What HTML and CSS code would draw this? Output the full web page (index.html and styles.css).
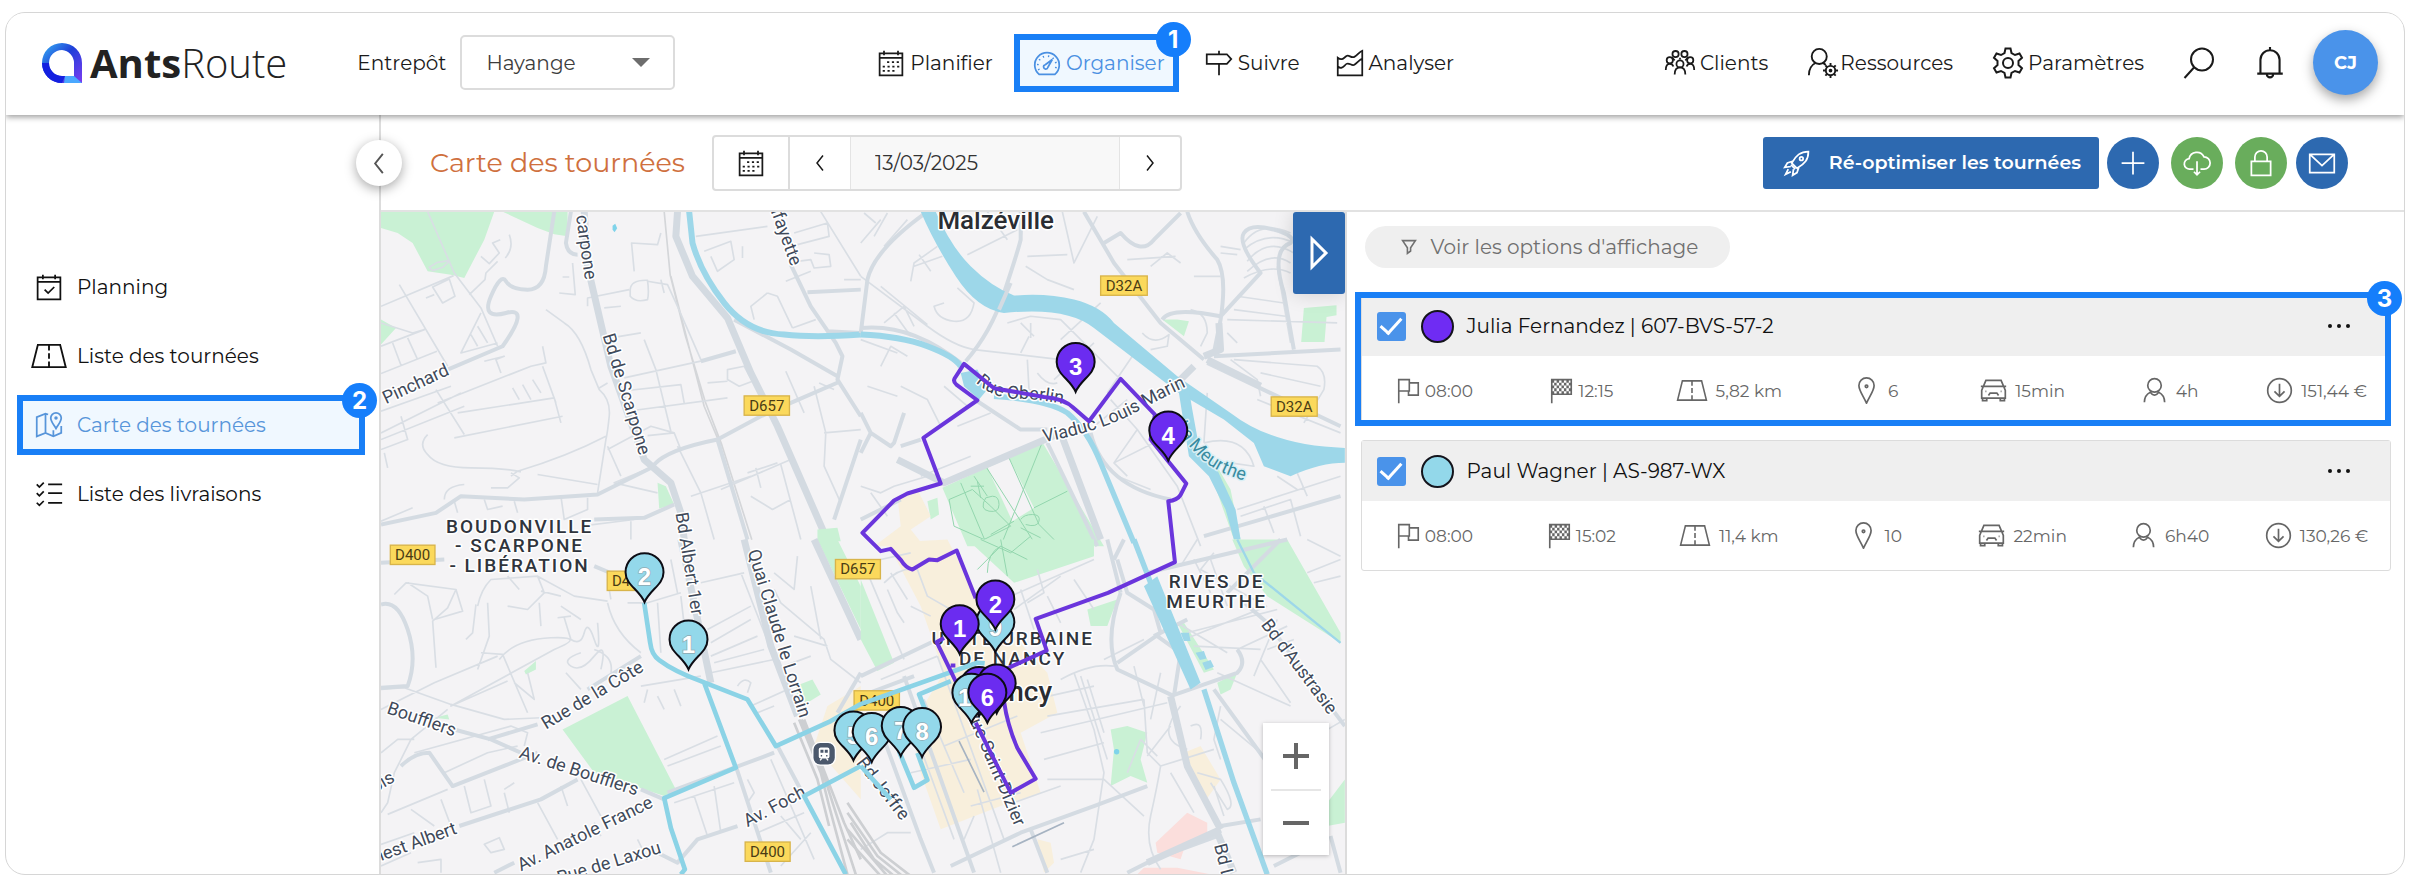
FILE: index.html
```html
<!DOCTYPE html>
<html lang="fr">
<head>
<meta charset="utf-8">
<meta name="viewport" content="width=device-width, initial-scale=1">
<title>AntsRoute – Carte des tournées</title>
<link rel="stylesheet" href="styles.css">
</head>
<body>
<svg class="sprite" aria-hidden="true">
  <symbol id="i-calendar" viewBox="0 0 32 32"><path d="M3 5h26v25H3zM3 10h26M8 2v5M24 2v5"/><path stroke-dasharray="2.500 3" d="M11.500 15h14M6.500 20h19M6.500 25h14"/></symbol>
  <symbol id="i-gauge" viewBox="0 0 32 32"><path d="M7 29a14 14 0 1 1 18 0zM14 18l8-6-5 9a2.500 2.500 0 1 1-3-3z"/><path stroke-dasharray="1.500 4.200" d="M7 24a10.500 10.500 0 1 1 18 0"/></symbol>
  <symbol id="i-sign" viewBox="0 0 32 32"><path d="M2 6h23l5 5.500-5 5.500H2zM16 2v4M16 17v13"/></symbol>
  <symbol id="i-chart" viewBox="0 0 32 32"><path d="M2 30V10c5 4 7 0 10-2s5 3 9 1 6-6 9-7v28zM2 20c5 4 7-1 10-3s6 3 9 1 6-6 9-7"/></symbol>
  <symbol id="i-group" viewBox="0 0 36 32"><circle cx="13" cy="6" r="3.500"/><circle cx="23" cy="6" r="3.500"/><circle cx="6.500" cy="13" r="3.500"/><circle cx="29.500" cy="13" r="3.500"/><circle cx="18" cy="17" r="4"/><path d="M2 24c0-5 2-7 4.500-7s3.500 1 4 3M34 24c0-5-2-7-4.500-7s-3.500 1-4 3M12 29c0-5 2-8 6-8s6 3 6 8M9 10l3 3M27 10l-3 3M18 10v2"/></symbol>
  <symbol id="i-usergear" viewBox="0 0 34 34"><circle cx="13" cy="10" r="8"/><path d="M2 30c0-8 3-11 7-13M17 17l3 2"/><circle cx="25" cy="25" r="5"/><path d="M25 17v3M25 30v3M17 25h3M30 25h3M19.500 19.500l2 2M28.500 28.500l2 2M30.500 19.500l-2 2M21.500 28.500l-2 2"/><circle cx="25" cy="25" r="1"/></symbol>
  <symbol id="i-gear" viewBox="0 0 32 32"><path d="M13.500 1.500h5l1 4.500 3.500 2 4.500-1.500 2.500 4.300-3.500 3.200v4l3.500 3.200-2.500 4.300-4.500-1.500-3.500 2-1 4.500h-5l-1-4.500-3.500-2-4.500 1.500L2 21.200 5.500 18v-4L2 10.800l2.500-4.300L9 8l3.500-2z"/><circle cx="16" cy="16" r="5"/></symbol>
  <symbol id="i-search" viewBox="0 0 32 32"><circle cx="19" cy="12.500" r="11"/><path d="M11 20.500L1.500 31"/></symbol>
  <symbol id="i-bell" viewBox="0 0 28 32"><path d="M2 26h24M5 26V13a9 9 0 0 1 18 0v13M14 1v3M11 26.500a3 3 0 1 0 6 0"/></symbol>
  <symbol id="i-left" viewBox="0 0 16 24"><path d="M12 2L4 12l8 10"/></symbol>
  <symbol id="i-right" viewBox="0 0 16 24"><path d="M4 2l8 10-8 10"/></symbol>
  <symbol id="i-rocket" viewBox="0 0 32 32"><path d="M29 3c-9 0-14 4-19 13l6 6c9-5 13-10 13-19zM11 14l-6 2-3 5 7-1M18 21l-2 6-5 3 1-7M6 23l-3 6 6-3M9 18l5 5"/><circle cx="21" cy="11" r="2"/></symbol>
  <symbol id="i-plus" viewBox="0 0 32 32"><path d="M16 3v26M3 16h26"/></symbol>
  <symbol id="i-cloud" viewBox="0 0 32 32"><path d="M12 23H8a6 6 0 0 1-1-12 9 9 0 0 1 17-2 7 7 0 0 1 0 14h-4M16 14v15M12.500 26l3.500 3.500 3.500-3.500"/></symbol>
  <symbol id="i-lock" viewBox="0 0 32 32"><path d="M5 14h22v16H5zM9 14V9a7 7 0 0 1 14 0v5"/></symbol>
  <symbol id="i-mail" viewBox="0 0 32 32"><path d="M2 6h28v21H2zM2.500 6.500L16 19 29.500 6.500"/></symbol>
  <symbol id="i-plan" viewBox="0 0 32 32"><path d="M3 5h26v25H3zM3 10h26M9 2v5M23 2v5M11 19l4 4 7-7"/></symbol>
  <symbol id="i-road" viewBox="0 0 40 28"><path d="M8 2h24l6 24H2z"/><path stroke-dasharray="6 3" d="M20 2v24"/></symbol>
  <symbol id="i-map" viewBox="0 0 32 32"><path d="M15 4l-3-1-10 4v22l10-4 9 4 9-4V17M12 3v22M21 22v7M24 20c-3-5-6-8-6-12a6 6 0 0 1 12 0c0 4-3 7-6 12z"/><circle cx="24" cy="8" r="1"/></symbol>
  <symbol id="i-list" viewBox="0 0 32 32"><path d="M15 5h16M15 15h16M15 26h16M2 5l3 3 5-5M2 15l3 3 5-5M2 26l3 3 5-5"/></symbol>
  <symbol id="i-filter" viewBox="0 0 20 20"><path d="M2 2h16l-6 9v4l-4 3v-7z"/></symbol>
  <symbol id="i-flag" viewBox="0 0 28 32"><path d="M2 31V2h13v14H2M15 6h11v15H14v-5"/></symbol>
  <symbol id="i-finish" viewBox="0 0 28 32"><path d="M2 31V2h24v18H2"/><path stroke-width="3.500" stroke-dasharray="3 3" d="M2 4h24M5 7.500h21M2 11h24M5 14.500h21M2 18h24"/></symbol>
  <symbol id="i-pin" viewBox="0 0 22 32"><path d="M11 31C7 22 2 16 2 10a9 9 0 0 1 18 0c0 6-5 12-9 21z"/><circle cx="11" cy="11" r="1.500"/></symbol>
  <symbol id="i-car" viewBox="0 0 32 28"><path d="M1 9h3l3-7h18l3 7h3M4 9h24l2 5v9H2v-9zM3 23v3h5v-3M24 23v3h5v-3M10 20l2-3h8l2 3"/><path d="M6.500 15h1M24.500 15h1"/></symbol>
  <symbol id="i-person" viewBox="0 0 26 32"><circle cx="13" cy="10" r="8"/><path d="M1 30c0-7 3-10 7-12M25 30c0-7-3-10-7-12M8 17c2 6 8 6 10 0"/></symbol>
  <symbol id="i-cost" viewBox="0 0 32 32"><circle cx="16" cy="16" r="14"/><path d="M16 8v15M10 17l6 6 6-6"/></symbol>
</svg>

<div class="frame">
  <header class="header">
    <div class="header-left">
      <a class="logo" href="#" aria-label="AntsRoute">
        <svg class="logo-mark" viewBox="0 0 40 40"><defs><linearGradient id="lg" x1="0" y1="0" x2="1" y2="1"><stop offset="0" stop-color="#38b6f5"/><stop offset=".45" stop-color="#1f3fd8"/><stop offset="1" stop-color="#7a3cf2"/></linearGradient></defs><path fill="url(#lg)" fill-rule="evenodd" d="M20 0a20 20 0 0 1 20 20v20H20A20 20 0 0 1 20 0zm0 7a13 13 0 0 0 0 26h12V20A13 13 0 0 0 20 7z"/><path fill="#1420e0" d="M0 20a20 20 0 0 0 20 20l3-7h-3A13 13 0 0 1 7 20z"/><path fill="#4aa8ff" d="M23 33h9l8 7H22z"/></svg>
        <span class="logo-text"><b>Ants</b>Route</span>
      </a>
      <div class="depot">
        <label for="depot">Entrepôt</label>
        <span class="select-wrap"><select id="depot"><option>Hayange</option></select></span>
      </div>
    </div>
    <nav class="nav">
      <a href="#"><svg class="icon"><use href="#i-calendar"/></svg>Planifier</a>
      <a class="nav-active" href="#"><svg class="icon"><use href="#i-gauge"/></svg>Organiser<span class="step">1</span></a>
      <a href="#"><svg class="icon"><use href="#i-sign"/></svg>Suivre</a>
      <a class="nav-last" href="#"><svg class="icon"><use href="#i-chart"/></svg>Analyser</a>
    </nav>
    <div class="header-right">
      <a href="#"><svg class="icon icon-lg"><use href="#i-group"/></svg>Clients</a>
      <a class="tight" href="#"><svg class="icon icon-lg"><use href="#i-usergear"/></svg>Ressources</a>
      <a href="#"><svg class="icon icon-lg"><use href="#i-gear"/></svg>Paramètres</a>
      <button class="plain" aria-label="Rechercher"><svg class="icon icon-lg"><use href="#i-search"/></svg></button>
      <button class="plain" aria-label="Notifications"><svg class="icon icon-lg"><use href="#i-bell"/></svg></button>
      <button class="avatar">CJ</button>
    </div>
  </header>

  <div class="body">
    <aside class="sidebar">
      <button class="collapse" aria-label="Réduire le menu"><svg class="icon"><use href="#i-left"/></svg></button>
      <nav class="menu">
        <a href="#"><svg class="icon"><use href="#i-plan"/></svg>Planning</a>
        <a href="#"><svg class="icon icon-road"><use href="#i-road"/></svg>Liste des tournées</a>
        <a class="menu-active" href="#"><svg class="icon"><use href="#i-map"/></svg>Carte des tournées<span class="step">2</span></a>
        <a href="#"><svg class="icon"><use href="#i-list"/></svg>Liste des livraisons</a>
      </nav>
    </aside>

    <main class="main">
      <div class="toolbar">
        <h1>Carte des tournées</h1>
        <div class="datebar">
          <button class="cell cell-cal" aria-label="Calendrier"><svg class="icon"><use href="#i-calendar"/></svg></button>
          <button class="cell" aria-label="Jour précédent"><svg class="icon"><use href="#i-left"/></svg></button>
          <input type="text" value="13/03/2025" aria-label="Date">
          <button class="cell" aria-label="Jour suivant"><svg class="icon"><use href="#i-right"/></svg></button>
        </div>
        <div class="actions">
          <button class="optimise"><svg class="icon"><use href="#i-rocket"/></svg>Ré-optimiser les tournées</button>
          <button class="round" aria-label="Ajouter"><svg class="icon"><use href="#i-plus"/></svg></button>
          <button class="round green" aria-label="Exporter"><svg class="icon"><use href="#i-cloud"/></svg></button>
          <button class="round green" aria-label="Verrouiller"><svg class="icon"><use href="#i-lock"/></svg></button>
          <button class="round round-mail" aria-label="Envoyer"><svg class="icon"><use href="#i-mail"/></svg></button>
        </div>
      </div>

      <div class="content">
        <section class="map" aria-label="Carte">
          <svg class="map-canvas" viewBox="0 0 2892 1989" preserveAspectRatio="xMidYMid slice">
            <defs><path id="drop" d="M0 0C-16-38-57-52-57-90A57 57 0 0 1 57-90C57-52 16-38 0 0z"/></defs>
            <!-- north-west -->
            <g transform="translate(0 -36)">
              <path class="park" d="M0 36H340L310 120 250 235 210 225 140 215 95 130 50 100 0 85zM365 36H560V110L520 104 470 85zM0 360L45 385 0 435zM830 850l25 10 25 55-45 12z"/>
              <path class="rail" d="M850 36l18 190 45 180 60 200 50 130 90 285M870 230l100 390 50 120"/>
              <path class="minor" d="M140 36L220 220 300 325 350 440M0 320L218 228M55 255L200 500M0 370L95 400 130 390 0 440M35 430L60 497M80 415L110 480M0 522L168 455M155 262L205 238 222 290 185 310zM135 295L160 285M205 183l-35 5-25 15 10 10 30-10 22-20M300 170L325 192 355 160 335 130 358 120M385 105q15 40-12 70M265 285L312 240 315 220 350 185M300 340L240 460 350 430M270 405L290 440M290 380L320 430M170 610L450 500 495 490 485 440M230 640L520 595 540 670M485 500L525 610M165 570L250 705M0 635L210 560M0 700L240 580M0 720L250 620 M220 715L545 650M395 565L415 600M425 555L450 600M455 540L480 580M310 485L370 470 345 480 360 520M140 705q-30 30 0 60 30 40 130 40t150 12M0 750L80 720 60 650M10 760L20 805M675 710Q560 770 410 815L390 830M330 865H380L415 835 390 820M495 330L550 370Q600 400 630 510L655 570Q690 600 685 650T675 720L650 880M655 565L680 550M680 740L720 830M545 232H565M575 190L583 285L535 280M620 320V295L745 270M670 325L720 320M690 415L780 400M760 215L752 130 830 135 840 100M748 270Q750 240 800 242 805 280 800 300 765 310 748 290zM840 240L850 280M800 245L860 255 890 320 960 480M790 420L825 510 870 695M730 535L980 480M720 575L900 555 910 610M740 635L1040 595M680 750L810 680 880 700 900 750M800 708L880 700M890 740L960 880 1000 1020M820 800L700 850 830 880M1040 510L1090 500 1115 545 1075 560 1040 540zM980 550L1040 545M945 110L1160 80M970 155L1050 125 1060 180 1010 215 990 170M1085 140V175M1160 280L1110 320 1120 360M1160 280L1190 290 1235 385M1235 385L1305 360M1215 515L1270 640M1315 550L1360 570M1100 820L1190 790M1125 805L1140 865M1110 890L1175 930 1230 900M1200 795L1260 1020M1300 560L1335 700 1330 800 1380 910M1330 700L1440 690M1020 870L1230 780M930 890L1110 830M1320 36L1440 230M1240 100L1340 70 1345 110 1250 135M1250 185L1290 180 1300 205 1350 200 1345 165 1300 160M1390 240H1440M1215 245L1290 215M0 965L95 925M190 900Q190 860 250 855M220 905L230 940M310 900L320 930 365 920M400 905L410 940M540 890L550 960 620 930V895M470 825L650 855M750 965V1020M600 980L760 960"/>
              <path class="road" d="M520 36L495 200Q490 270 440 270T375 245 330 290 375 340 365 440L200 510M570 36L555 130Q560 165 590 165M0 975L165 940 240 890 430 900 650 885 760 830 820 800M820 795Q860 750 1010 720L1140 650 1230 610 1380 545M640 960L790 955 880 915M960 485L1065 455M1010 720L1100 1020M1280 278L1440 270M1060 360L1230 450 1370 530M1230 195L1290 320 1365 430 1385 470 1370 540 1440 650M1440 720L1360 960M1440 400L1340 395"/>
              <path class="main-road" d="M610 36L620 200 690 500 790 780 870 850 900 940 910 1020M890 36L885 110 935 230 1040 355 1110 520 1190 680 1330 1000"/>
              <path class="water-line" d="M925 36L935 130Q960 220 1030 310T1210 405Q1300 415 1440 405"/>
              <path fill="#7fd3ea" d="M695 78l8-6 6 14-8 12-6-8z"/>
              <path class="park" d="M1310 990l60-5 10 40h-70z"/>
            </g>
            <!-- north-east -->
            <g transform="translate(1440 -36)">
              <path class="park" d="M245 865L545 728 730 1040H320zM200 905l30-10 5 50-25 15zM905 360l45 0 35 5-15 45zM1330 325l98-8v30l-30 5-6 75h-70zM1000 740l60 110 60 170h20l-30-150-70-120z"/>
              <path fill="#f4f3f5" d="M380 805L445 775 520 925 455 965z"/>
              <path class="park-path" d="M545 728L420 1040M300 850l80 190M265 900l70-30 55 50 60 60-80 40-90-40zM340 830l40 60M370 860h-40M350 845l10 50M395 890q20 0 20 25t-30 20-10-40zM460 965l-70 40M445 775l90 200 60 60M520 925l100-50M480 960q10-15 35-15t20 20-40 10M480 985l60 30M375 800l140 220"/>
              <path class="sand" d="M110 890l60-20 40 80-60 40 40 50H40l80-60z"/>
              <path class="minor" d="M0 130L60 60M10 40L45 70M80 40L40 110M140 60L70 140M150 245L160 190 230 140M175 165L210 215M160 200L245 170M290 265L340 310Q330 370 280 365T220 320L250 310M60 260L200 375M70 370L130 320 160 380M100 340L150 410M320 165L470 90M380 36L440 120M490 40L480 120M500 170L620 165M605 36L640 190 710 50M495 200L560 240 640 270M440 370L510 350 600 360 640 400 800 560M480 370L520 410M510 370V415M480 460L505 410M500 480L505 570 600 590M700 430L580 540M0 230L200 380Q280 440 340 450L600 480 680 500M530 520Q560 560 590 550M815 470L740 580M800 180L945 170M870 200L920 160 960 190M600 420L720 310M1000 230H1080M1080 140L1140 150M1080 160L1130 165M1150 130Q1200 60 1290 100M1150 150Q1220 90 1300 130M1160 185Q1220 110 1300 160M1160 215Q1230 150 1290 190M1150 235Q1230 190 1290 220M1250 200L1290 430M1130 290L1270 310M1120 330L1275 350M1100 360L1430 370M845 400Q880 440 925 405L920 440 870 450M990 330Q1040 340 1040 400L1020 440M1100 400L1130 430M1110 480L1190 540 1200 590M1120 480L1370 500Q1400 520 1390 570L1330 670M1200 520L1380 560M1040 580L1030 730M1190 600L1440 700M750 600L830 690 950 860 1020 1040M800 600L700 680M830 690L760 790 800 830M760 790L900 720M770 830L870 870M1030 730Q1150 700 1180 800L1110 790M1130 930L1440 830M1140 950L1290 900 1320 1010M1210 920L1240 1000M1250 830L1310 870M1310 820L1340 890M0 860L60 880 100 860 200 830M30 880L80 950M180 830L330 770M120 560L200 600 240 680M60 500L90 440 140 470M0 420L110 460M20 560L110 590M250 560L320 620M290 680L390 640"/>
              <path class="road" d="M200 36Q40 150 20 240L0 400M0 385Q150 370 300 490M315 485Q390 400 430 280T480 120V36M0 640L30 700 90 740 100 730 130 640M30 700L0 760M120 740L180 720M350 605L480 690 560 690M670 36L760 190 900 370 1030 480M730 130L780 100Q840 170 880 120L960 40M980 36Q1000 100 1070 180 1100 230 1080 360L1060 460M905 360Q930 320 1080 350M1080 350L1200 220Q1130 130 1150 100T1240 90 1290 130Q1230 150 1270 280L1300 450M1060 470L1440 450M1040 490L1440 680M690 700Q730 860 930 900M1030 1010L1440 890M120 900L0 960M560 730L710 1040"/>
              <path class="main-road" d="M110 780L250 850 600 700 720 1020M1000 500L960 540M1030 470L1080 450 1075 370M1040 480L1200 560"/>
              <path class="water" d="M180 36H225Q270 140 330 200T460 288Q560 280 640 300T760 370L950 530 1110 640Q1240 740 1453 745V790Q1380 790 1290 830L1210 800 1180 730 1090 660 955 580 700 385Q620 320 430 340 350 330 285 230T180 36z"/>
              <path class="water" d="M955 580l30-10 10 60 20 110 50 60 60 130 15 90h-20l-25-90-50-100-60-60zM300 520l50-10 30 60-25 30-45-40z"/>
              <path class="water-line" d="M0 405Q120 410 200 440T300 500"/>
              <path class="canal" d="M400 590Q560 600 620 640 680 690 720 790L820 1030"/>
              <path class="road" d="M415 330L450 250"/>
            </g>
            <!-- south-west -->
            <g transform="translate(0 984)">
              <path class="park" d="M545 570L740 470 885 750 850 770 640 700zM430 395l35-30 0 25-30 15zM160 535l40-10 5 15zM1245 440l50-20 25 45-40 25-30-10zM1310 0h60l70 140v130z"/>
              <path class="sand" d="M1340 500L1440 440V780L1300 620z"/>
              <path class="minor" d="M40 165L75 130 225 150 200 205 155 245 165 385M155 240L140 170 80 130M290 200Q300 150 330 120L470 110 580 170 680 185M470 110L490 160 440 210 380 200M480 155L540 170M475 190L480 260M285 195L275 280 255 300M225 150L245 215 160 240M320 190L325 290 290 390M380 110L415 150M540 200L600 240M550 235L570 300M530 235L570 230M570 300Q600 320 610 280T640 300 650 250M600 340Q540 360 570 380T640 350 660 390M640 330Q700 350 690 400M555 400L600 450M355 360Q400 300 510 295T520 330L210 500 380 425M0 450L70 445 210 495 370 540 480 535M0 510L160 430 350 350M300 340L365 345 440 520M400 430L460 480 440 400M200 510L90 600 40 700 20 790 0 820M0 640L50 600 100 600M100 640L390 560 440 580 430 620M145 640L190 700 215 745M190 700L320 640 410 620M20 825L200 750M180 780L210 860M250 740L270 820 330 800 310 720M370 750L400 730M370 760L385 820M90 810L160 860M310 915L355 895 370 930 330 940zM470 790L530 900M600 720L660 830M540 740L560 800M680 190Q700 280 780 340M680 120L690 180M830 190L840 340M900 170L915 300M740 190L800 190 900 160M870 60L890 160M990 350L1130 290M990 310L1110 240M980 270L1110 200M960 130L1090 100M1080 100L1170 330M1000 370L1150 330M990 400L1180 360M780 440L960 410M800 450L790 490M830 470L850 510M880 450L900 500M850 660L1010 590M860 680L1020 620M1070 440Q1090 410 1110 430L1100 460M1110 500L1220 450M1130 520L1180 500M1180 150L1200 190 1330 300 1350 360 1440 430M1250 50L1240 150 1180 100M1290 140L1320 300M1240 290L1340 320M1210 380L1290 350M1000 740L1020 880M940 770L980 890M1100 720L1120 760 1100 790M880 790L1060 730M1170 660L1300 960M1200 830L1260 900M1130 880L1270 820M1290 880L1200 980M770 900L800 960M640 850L660 890M0 915L100 880M110 970L180 960V1000M0 980L90 940"/>
              <path class="road" d="M0 195Q50 180 80 270T80 440L0 445M200 565L330 600 420 640M320 600L470 555M60 680Q100 640 145 640L215 740 470 640M235 860L480 780 590 720M780 750L850 780M860 760L1180 640M1065 680L1170 1000M830 940L890 970 950 900 1070 860M400 970L340 1000M640 80L700 105M780 350L620 450M190 60L0 70M1190 620L1270 770M1440 400L1370 520"/>
              <path class="main-road" d="M900 0L990 430M1090 0L1170 320 1250 530M1300 0L1440 300"/>
              <path class="railyard" d="M1255 540L1320 700 1345 800 1400 1005M1270 540L1340 720 1390 850 1440 960M1240 550L1310 720 1345 860M1262 540L1330 710 1365 820 1425 1005"/>
            </g>
            <!-- south-east -->
            <g transform="translate(1440 984)">
              <path class="sand" d="M80 10L260 0 350 170 560 400 590 520 480 580 540 760 420 800 240 870 180 700 150 560 250 400 180 200zM530 900l40 10 10 60-30 30zM970 640l50-20 60 100-50 70z"/>
              <path class="park" d="M320 0H700V50L460 130zM0 120L100 370 50 395 0 300zM680 210L770 180 740 260 690 260zM1115 0L1280 0 1440 280V310L1220 170 1150 80zM950 250l20 0 90 140-30 10zM1070 430L1130 400 1110 450 1080 465zM750 570l50-10 60 20-20 80 20 70-50-20-60 30 10-110zM1400 790L1453 720V850L1400 860z"/>
              <path class="pink" d="M885 910L980 820 1040 850 1040 900 970 930 960 960 890 940zM850 985l100 0 100 20H830z"/>
              <path class="park-path" d="M350 90L420 20 500 60M420 0L440 110M360 0l90 40 60-50M380 100q0-60 40-80"/>
              <path class="minor" d="M60 60L150 40M70 130Q120 80 170 90L200 170 270 210M80 150L110 220 130 250M90 100L140 180M150 200L210 230M20 100L130 360M60 420L230 350M230 350L430 900M250 620L470 530M170 600L280 900M190 480L310 760M120 560L200 540M350 750L420 1000M150 700L330 660M330 800L480 760M310 900L340 830M0 930L80 880 150 880M430 800L600 740M560 170L600 250M530 90L550 160 500 190M480 150L520 270M450 170L700 60M460 210L600 110M640 120L700 210M600 420Q690 370 760 380M640 400L700 570 730 700 700 900 660 1000M660 410L740 660M520 480L700 440M560 530L850 480M540 580L920 490M680 420L730 580M820 380L850 500M850 480L860 640 900 680Q890 740 870 830T900 990M730 360L850 300M900 400L870 540M550 660L730 610M560 720L730 720 850 830M840 600L800 700M840 600L890 650M860 650L930 560M900 680L1060 630M960 500Q880 600 980 630M990 560Q1030 540 1020 600M950 250L1100 340M970 300L1220 200M1000 320L1200 330M1070 400L1290 500M1130 330L1280 260M1200 360L1290 490M1220 330L1300 300M1250 240L1180 410M1080 500L1060 600 1080 660M1010 700L1080 720Q1130 800 1100 810L1050 730M1060 740L1090 830M1080 540L1200 640M1060 40L1020 90 1180 180M1000 60L1050 160M960 80L1010 0M1050 60L1100 200M980 280L1250 210M1340 100L1440 60M1360 130L1440 110M1340 0L1440 50M1350 600L1453 540M600 960L700 930M930 700L1000 820"/>
              <path class="road" d="M0 410L230 300M130 410L340 1000M0 470L160 410M70 600L180 900 220 1000M270 980L480 880 700 800 860 740M780 160Q730 300 770 390L940 470M770 60L800 160 880 210 900 280 770 370M880 290L980 240M790 0L760 60M930 470L1130 400Q1160 370 1130 330M1060 450L1220 670M1080 860L1200 840M1240 980L1400 900M800 1000L880 960 1070 890M1410 890L1440 1000M1100 160L1260 0M510 870L560 1000M940 470L960 340 890 290M860 100L1280 0M740 0L780 160M1140 180L1220 250 1453 560"/>
              <path class="main-road" d="M930 470L980 680 1080 870M1080 870L860 970M1070 880L1120 1000"/>
              <path fill="none" stroke="#a6b3c2" stroke-width="5" d="M295 605L370 758M455 922L610 850"/>
              <path class="railyard" d="M-40 790L60 940 150 1010M-30 850L40 960 100 1010M-40 900L60 1010M-40 820L50 950 125 1010M-40 870L80 1010"/>
              <path class="water" d="M850 140L890 110 1020 430 990 450zM960 280l25 0 5 25-20 0zM1005 340l25-5 8 22-20 5zM1025 370l25-8 10 20-25 10z"/>
              <path class="canal" d="M820 0L870 130M1030 450L1120 730 1220 1005"/>
              <path class="canal thin" d="M1130 0L1180 100 1440 310"/>
              <circle cx="768" cy="637" r="8" fill="#7fd3ea"/>
            </g>

            <g class="place">
              <text x="1670" y="52" font-size="78">Malzéville</text>
              <text x="1778" y="1468" font-size="84">Nancy</text>
            </g>
            <g class="district" text-anchor="middle">
              <text x="416" y="964">BOUDONVILLE</text>
              <text x="416" y="1022">- SCARPONE</text>
              <text x="416" y="1082">- LIBÉRATION</text>
              <text x="2508" y="1131">RIVES DE</text>
              <text x="2508" y="1190">MEURTHE</text>
              <text x="1896" y="1302">UNITÉ URBAINE</text>
              <text x="1896" y="1362">DE NANCY</text>
            </g>
            <g class="street">
              <path id="p-meurthe" fill="none" d="M2385 640Q2440 745 2530 785T2680 812"/>
              <path id="p-oberlin" fill="none" d="M1785 512Q1840 562 1910 562T2060 580"/>
              <path id="p-viaduc" fill="none" d="M1990 692Q2160 660 2270 600T2440 515"/>
              <path id="p-quai" fill="none" d="M1100 1020Q1150 1180 1190 1310T1270 1560"/>
              <text transform="translate(15 578) rotate(-25)">Pinchard</text>
              <text transform="translate(585 12) rotate(82)">carpone</text>
              <text transform="translate(665 372) rotate(73)">Bd de Scarpone</text>
              <text transform="translate(1164 -18) rotate(70)">afayette</text>
              <text transform="translate(884 905) rotate(81)">Bd Albert 1er</text>
              <text><textPath href="#p-quai">Quai Claude le Lorrain</textPath></text>
              <text transform="translate(495 1555) rotate(-31)">Rue de la Côte</text>
              <text transform="translate(15 1505) rotate(19)">Boufflers</text>
              <text transform="translate(412 1638) rotate(18)">Av. de Boufflers</text>
              <text transform="translate(-58 1768) rotate(-30)">Blois</text>
              <text transform="translate(-62 1972) rotate(-20)">Ernest Albert</text>
              <text transform="translate(420 1980) rotate(-26)">Av. Anatole France</text>
              <text transform="translate(535 2018) rotate(-17)">Rue de Laxou</text>
              <text transform="translate(1100 1848) rotate(-28)">Av. Foch</text>
              <text transform="translate(1425 1655) rotate(52)">Bd Joffre</text>
              <text transform="translate(1755 1500) rotate(67)">Rue Saint-Dizier</text>
              <text transform="translate(2640 1240) rotate(53)">Bd d'Austrasie</text>
              <text transform="translate(2500 1902) rotate(76)">Bd Lobau</text>
              <text><textPath href="#p-oberlin">Rue Oberlin</textPath></text>
              <text><textPath href="#p-viaduc">Viaduc Louis Marin</textPath></text>
              <text class="river"><textPath href="#p-meurthe">La Meurthe</textPath></text>
            </g>
            <g class="shield" text-anchor="middle">
              <rect x="2160" y="193" width="140" height="58"/><text x="2230" y="238">D32A</text>
              <rect x="2672" y="556" width="138" height="58"/><text x="2741" y="601">D32A</text>
              <rect x="1090" y="553" width="136" height="58"/><text x="1158" y="598">D657</text>
              <rect x="1364" y="1044" width="135" height="58"/><text x="1431" y="1089">D657</text>
              <rect x="28" y="1001" width="134" height="58"/><text x="95" y="1046">D400</text>
              <rect x="679" y="1079" width="134" height="58"/><text x="746" y="1124">D400</text>
              <rect x="1420" y="1438" width="136" height="58"/><text x="1488" y="1483">D400</text>
              <rect x="1093" y="1892" width="135" height="58"/><text x="1160" y="1937">D400</text>
            </g>
            <g transform="translate(1330 1627)"><rect x="-34" y="-34" width="68" height="68" rx="22" fill="#4b586c" stroke="#fff" stroke-width="4"/><rect x="-16" y="-19" width="32" height="33" rx="6" fill="#fff"/><path d="M-11-12h9v9h-9zM2-12h9v9H2z" fill="#4b586c"/><path d="M-10 6h4M6 6h4" stroke="#4b586c" stroke-width="5"/><path d="M-12 20l5-6M12 20l-5-6" stroke="#fff" stroke-width="4"/></g>

            <g class="route cyan">
              <path d="M790 1174L808 1294Q812 1330 835 1346 880 1380 960 1409L1100 1464 1185 1604 1350 1529 1440 1478 1790 1354 1812 1356M970 1414L1065 1669 850 1760 870 1850 912 1974 900 1989M1440 1664L1270 1754 1395 1989M1440 1664L1530 1764M1555 1620L1600 1729 1640 1706 1610 1625M1710 1409L1615 1449 1635 1500"/>
            </g>
            <g class="route purple">
              <path d="M1785 1160L1728 1017 1670 1046 1645 1044 1595 1074Q1575 1070 1560 1045L1530 1012 1500 1019 1445 964 1540 867 1580 846 1680 816 1628 679 1790 566 1728 520Q1716 510 1722 500L1750 457 1840 530 1990 556Q2050 560 2080 590L2125 629 2220 502 2323 609 2310 684 2417 816 2400 850Q2390 866 2363 869L2383 1052 2182 1144 1965 1222 1998 1317 1860 1380M1690 1280L1668 1292 1725 1410M1710 1362h14M1785 1534L1890 1744 1965 1702 1910 1610Q1880 1540 1870 1470"/>
            </g>

            <g class="pins" text-anchor="middle">
              <g class="pin cyan" transform="translate(791 1172)"><use href="#drop"/><text y="-50">2</text></g>
              <g class="pin cyan" transform="translate(923 1374)"><use href="#drop"/><text y="-50">1</text></g>
              <g class="pin cyan" transform="translate(1418 1647)"><use href="#drop"/><text y="-50">5</text></g>
              <g class="pin cyan" transform="translate(1473 1652)"><use href="#drop"/><text y="-50">6</text></g>
              <g class="pin cyan" transform="translate(1560 1634)"><use href="#drop"/><text y="-50">7</text></g>
              <g class="pin cyan" transform="translate(1624 1637)"><use href="#drop"/><text y="-50">8</text></g>
              <g class="pin cyan" transform="translate(1844 1322)"><use href="#drop"/><text y="-48">9</text></g>
              <g class="pin purple" transform="translate(1844 1254)"><use href="#drop"/><text y="-50">2</text></g>
              <g class="pin purple" transform="translate(1737 1328)"><use href="#drop"/><text y="-50">1</text></g>
              <g class="pin purple" transform="translate(2085 541)"><use href="#drop"/><text y="-50">3</text></g>
              <g class="pin purple" transform="translate(2363 747)"><use href="#drop"/><text y="-50">4</text></g>
              <g class="pin purple" transform="translate(1795 1514)"><use href="#drop"/></g>
              <g class="pin purple" transform="translate(1848 1506)"><use href="#drop"/></g>
              <g class="pin cyan" transform="translate(1772 1534)"><use href="#drop"/><text y="-50">10</text></g>
              <g class="pin purple" transform="translate(1820 1534)"><use href="#drop"/><text y="-50">6</text></g>
            </g>
          </svg>
          <button class="map-toggle" aria-label="Agrandir la carte"><svg viewBox="0 0 20 36"><path d="M3 4l14 14L3 32z"/></svg></button>
          <div class="zoom">
            <button aria-label="Zoom avant"><svg viewBox="0 0 28 28"><path d="M14 1v26M1 14h26"/></svg></button>
            <button aria-label="Zoom arrière"><svg viewBox="0 0 28 28"><path d="M1 14h26"/></svg></button>
          </div>
        </section>

        <section class="panel">
          <button class="filter"><svg class="icon"><use href="#i-filter"/></svg>Voir les options d'affichage</button>

          <article class="card">
            <div class="card-head">
              <input type="checkbox" id="t1" checked>
              <span class="dot dot-purple"></span>
              <label for="t1">Julia Fernandez | 607-BVS-57-2</label>
              <button class="more" aria-label="Options"><i></i><i></i><i></i></button>
            </div>
            <ul class="stats">
              <li><svg class="icon"><use href="#i-flag"/></svg>08:00</li>
              <li><svg class="icon"><use href="#i-finish"/></svg>12:15</li>
              <li class="wide"><svg class="icon icon-road"><use href="#i-road"/></svg>5,82 km</li>
              <li class="wide"><svg class="icon"><use href="#i-pin"/></svg>6</li>
              <li class="wide"><svg class="icon"><use href="#i-car"/></svg>15min</li>
              <li class="wide"><svg class="icon"><use href="#i-person"/></svg>4h</li>
              <li class="wide"><svg class="icon"><use href="#i-cost"/></svg>151,44 €</li>
            </ul>
            <div class="card-focus"></div>
            <span class="step">3</span>
          </article>

          <article class="card">
            <div class="card-head">
              <input type="checkbox" id="t2" checked>
              <span class="dot dot-cyan"></span>
              <label for="t2">Paul Wagner | AS-987-WX</label>
              <button class="more" aria-label="Options"><i></i><i></i><i></i></button>
            </div>
            <ul class="stats">
              <li><svg class="icon"><use href="#i-flag"/></svg>08:00</li>
              <li><svg class="icon"><use href="#i-finish"/></svg>15:02</li>
              <li class="wide"><svg class="icon icon-road"><use href="#i-road"/></svg>11,4 km</li>
              <li class="wide"><svg class="icon"><use href="#i-pin"/></svg>10</li>
              <li class="wide"><svg class="icon"><use href="#i-car"/></svg>22min</li>
              <li class="wide"><svg class="icon"><use href="#i-person"/></svg>6h40</li>
              <li class="wide"><svg class="icon"><use href="#i-cost"/></svg>130,26 €</li>
            </ul>
          </article>
        </section>
      </div>
    </main>
  </div>
</div>
</body>
</html>
```
FILE: styles.css
```css
* { box-sizing: border-box; }

:root {
  --blue: #2d69b0;
  --light-blue: #4a93ea;
  --focus: #197ff6;
  --green: #69ad5c;
  --line: #dcdcdc;
}

body {
  margin: 0;
  padding: 12px 5px;
  min-height: 100vh;
  display: flex;
  background: #fff;
  color: #1a1a1a;
  font-family: Montserrat, Inter, "Noto Sans", sans-serif;
  font-size: 20px;
  line-height: 24px;
}

button, input, select { font: inherit; color: inherit; }
button { cursor: pointer; border: 0; background: none; padding: 0; }
a { color: inherit; text-decoration: none; }

.sprite { position: absolute; width: 0; height: 0; }

.icon {
  width: 28px;
  height: 28px;
  flex: none;
  fill: none;
  stroke: currentColor;
  stroke-width: 2;
}
.icon-lg { width: 32px; height: 34px; }

.frame {
  flex: 1;
  min-width: 0;
  display: flex;
  flex-direction: column;
  border: 1px solid #d6d6d6;
  border-radius: 20px;
  overflow: hidden;
}

/* Header */
.header {
  position: relative;
  z-index: 2;
  display: flex;
  align-items: center;
  justify-content: space-between;
  height: 102px;
  padding: 0 26px 3px 36px;
  background: #fff;
  box-shadow: 0 2px 6px rgba(0, 0, 0, .4);
}
.header-left, .header-right, .nav, .depot, .logo { display: flex; align-items: center; }
.header-left { gap: 70px; }
.logo { gap: 8px; }
.logo-mark { width: 40px; height: 40px; }
.logo-text { font: 300 40px/48px "Open Sans", sans-serif; color: #222; }
.logo-text b { font-weight: 700; }
.depot { gap: 14px; }
.select-wrap { position: relative; }
.select-wrap::after {
  content: "";
  position: absolute;
  right: 25px;
  top: 23px;
  border: 9px solid transparent;
  border-top-color: #6d6d6d;
  border-bottom: 0;
  pointer-events: none;
}
.select-wrap select {
  appearance: none;
  display: block;
  width: 215px;
  height: 55px;
  padding: 0 24px;
  border: 2px solid var(--line);
  border-radius: 5px;
  background: #fff;
  color: #3d3d3d;
}
.nav { gap: 20px; margin-right: 8px; }
.nav a, .header-right a { display: flex; align-items: center; gap: 5px; }
.header-right a { gap: 4px; }
.header-right .tight { gap: 1px; }
.nav a { position: relative; padding: 0 6px; }
.nav .nav-active {
  height: 58px;
  padding: 0 8px 0 13px;
  margin-left: -5px;
  border: 6px solid var(--focus);
  background: #f0f8ff;
  color: #4a90e2;
}
.nav .nav-last { margin-left: 4px; }
.step {
  position: absolute;
  top: -18px;
  right: -18px;
  width: 35px;
  height: 35px;
  border-radius: 50%;
  background: #157efb;
  color: #fff;
  font: 700 24px/35px Inter, sans-serif;
  text-align: center;
}
.header-right { gap: 39px; }
.plain { display: flex; }
.avatar {
  width: 65px;
  height: 65px;
  margin-left: -12px;
  border-radius: 50%;
  background: var(--light-blue);
  color: #fff;
  font-size: 18px;
  font-weight: 700;
  box-shadow: 0 5px 12px rgba(0, 0, 0, .35);
}

/* Body */
.body { flex: 1; display: flex; min-height: 0; }
.sidebar {
  position: relative;
  flex: none;
  width: 375px;
  padding-top: 142px;
  border-right: 2px solid var(--line);
}
.collapse {
  position: absolute;
  z-index: 1;
  top: 25px;
  right: -23px;
  display: grid;
  place-items: center;
  width: 46px;
  height: 46px;
  border-radius: 50%;
  background: #fff;
  color: #555;
  box-shadow: 0 3px 12px rgba(0, 0, 0, .35);
}
.collapse .icon { height: 23px; }
.menu { display: flex; flex-direction: column; gap: 9px; padding: 0 14px 0 11px; color: #111; }
.menu a {
  position: relative;
  display: flex;
  align-items: center;
  gap: 14px;
  height: 60px;
  padding: 0 18px;
}
.menu .icon-road { width: 38px; height: 26px; margin: 0 -5px; }
.menu .menu-active {
  padding: 0 12px;
  border: 6px solid var(--focus);
  background: #f0f8ff;
  color: #5795da;
}

.main { flex: 1; min-width: 0; display: flex; flex-direction: column; }
.toolbar {
  display: flex;
  align-items: center;
  height: 97px;
  padding: 0 56px 0 49px;
  border-bottom: 2px solid #e2e2e2;
}
h1 { margin: 0 27px 0 0; color: #cf703e; font-size: 27px; font-weight: 400; line-height: 36px; white-space: nowrap; }
.datebar {
  display: flex;
  width: 470px;
  height: 56px;
  border: 2px solid var(--line);
  border-radius: 4px;
}
.cell { display: grid; place-items: center; width: 60px; }
.cell .icon { height: 18px; }
.cell-cal { width: 76px; border-right: 2px solid var(--line); }
.cell-cal .icon { height: 28px; }
.datebar input {
  flex: 1;
  min-width: 0;
  padding: 0 24px;
  border: solid #e4e4e4;
  border-width: 0 1px;
  background: #f8f8f8;
  color: #333;
}
.actions { display: flex; gap: 12px; margin-left: auto; }
.optimise {
  display: flex;
  align-items: center;
  gap: 18px;
  height: 52px;
  padding: 0 18px 0 20px;
  margin-right: -4px;
  border-radius: 3px;
  background: var(--blue);
  color: #fff;
  font-weight: 600;
  font-size: 19px;
  white-space: nowrap;
}
.round {
  display: grid;
  place-items: center;
  width: 52px;
  height: 52px;
  border-radius: 50%;
  background: var(--blue);
  color: #fff;
}
.round-mail { margin-left: -3px; }
.green { background: var(--green); }

.content {
  flex: 1;
  display: grid;
  grid-template-columns: minmax(0, 966fr) minmax(0, 1058fr);
  min-height: 0;
}

/* Map */
.map { position: relative; overflow: hidden; background: #f4f3f5; border-right: 2px solid var(--line); }
.map-canvas { position: absolute; inset: 0; width: 100%; height: 100%; }
.minor, .road, .main-road, .rail, .railyard, .water-line, .canal, .park-path { fill: none; stroke-linejoin: round; }
.minor { stroke: #d9dee4; stroke-width: 5; }
.road { stroke: #d4dbe2; stroke-width: 12; }
.main-road { stroke: #d3dae1; stroke-width: 21; }
.rail { stroke: #d4d6d9; stroke-width: 5; }
.railyard { stroke: #cdcfd2; stroke-width: 8; }
.water { fill: #9dd7e9; }
.water-line { stroke: #9dd7e9; stroke-width: 18; }
.canal { stroke: #9dd7e9; stroke-width: 16; }
.thin { stroke-width: 7; }
.park { fill: #c9f1d4; }
.park-path { stroke: #93d6ae; stroke-width: 3; }
.sand { fill: #f8efdc; }
.pink { fill: #fbdedc; }
.map text { font-family: Roboto, sans-serif; }
.place text, .district text, .street text { paint-order: stroke; stroke: #fff; stroke-width: 9px; stroke-linejoin: round; }
.place text { font-weight: 500; fill: #2a2d33; }
.district text { font-size: 57px; font-weight: 500; letter-spacing: 6px; fill: #2f343c; }
.street text { font-size: 54px; fill: #3f4a5a; }
.street .river { fill: #3a8ba0; stroke: #d9eff5; }
.shield rect { fill: #fbd95c; stroke: #d8b44a; stroke-width: 4; }
.shield text { font-size: 45px; fill: #4a3c14; }
.route path { fill: none; stroke-linejoin: round; }
.route.cyan path { stroke: #8bd3e6; stroke-width: 14; }
.route.purple path { stroke: #6a35dc; stroke-width: 12; }
.pin use { stroke: #0c0c14; stroke-width: 6; }
.pin text { font-family: "Liberation Sans", sans-serif; font-size: 72px; font-weight: 700; fill: #fff; }
.pin.purple use { fill: #6b2cf0; }
.pin.cyan use { fill: #93d8ea; }
.pin.cyan text { paint-order: stroke; stroke: #8fa9b2; stroke-width: 4px; }

.map-toggle {
  position: absolute;
  top: 0;
  right: 0;
  width: 52px;
  height: 82px;
  border-radius: 3px;
  background: var(--blue);
  box-shadow: 0 0 20px rgba(0, 0, 0, .15);
}
.map-toggle svg { width: 20px; height: 36px; fill: none; stroke: #fff; stroke-width: 3; vertical-align: middle; }
.zoom {
  position: absolute;
  right: 16px;
  bottom: 19px;
  width: 66px;
  padding: 0 8px;
  background: #fff;
  box-shadow: 0 1px 4px rgba(0, 0, 0, .25);
}
.zoom button { display: grid; place-items: center; width: 100%; height: 66px; }
.zoom button + button { border-top: 2px solid #e6e6e6; }
.zoom svg { width: 28px; height: 28px; stroke: #666; stroke-width: 4; }

/* Tours */
.panel {
  display: flex;
  flex-direction: column;
  gap: 14px;
  padding: 14px 13px 14px 14px;
}
.filter {
  display: flex;
  align-items: center;
  align-self: flex-start;
  gap: 14px;
  height: 42px;
  margin: 0 0 13px 4px;
  padding: 0 32px 0 36px;
  border-radius: 21px;
  background: #efefef;
  color: #707070;
}
.filter .icon { width: 16px; height: 16px; }
.card { position: relative; border: 1px solid var(--line); border-radius: 3px; }
.card-head {
  display: flex;
  align-items: center;
  height: 60px;
  padding: 0 40px 0 15px;
  background: #efefef;
  color: #111;
}
.card-head input {
  appearance: none;
  display: grid;
  place-items: center;
  width: 29px;
  height: 29px;
  margin: 0;
  border-radius: 3px;
  background: var(--light-blue);
}
.card-head input::after {
  content: "";
  width: 9px;
  height: 18px;
  margin-bottom: 5px;
  border: solid #fff;
  border-width: 0 3px 3px 0;
  transform: rotate(42deg);
}
.dot { width: 33px; height: 33px; margin: 0 13px 0 15px; border: 2px solid #14141c; border-radius: 50%; }
.dot-purple { background: #6f2cf3; }
.dot-cyan { background: #93d8ea; }
.more { display: flex; gap: 5px; margin-left: auto; padding: 8px 0; }
.more i { width: 4px; height: 4px; border-radius: 50%; background: #111; }
.stats {
  display: grid;
  grid-template-columns: repeat(7, 1fr);
  align-items: center;
  height: 69px;
  margin: 0;
  padding: 0;
  list-style: none;
  color: #666;
  font-size: 17px;
}
.stats li { display: flex; align-items: center; justify-content: center; gap: 5px; white-space: nowrap; }
.stats .wide { gap: 8px; }
.stats .icon { width: 27px; height: 27px; }
.stats li:not(.wide) .icon { width: 23px; height: 26px; }
.stats .icon-road { width: 32px; height: 23px; }
.card-focus { position: absolute; inset: -4px -1px -1px -7px; border: 6px solid var(--focus); }
.card .step { top: -15px; right: -12px; }
```
